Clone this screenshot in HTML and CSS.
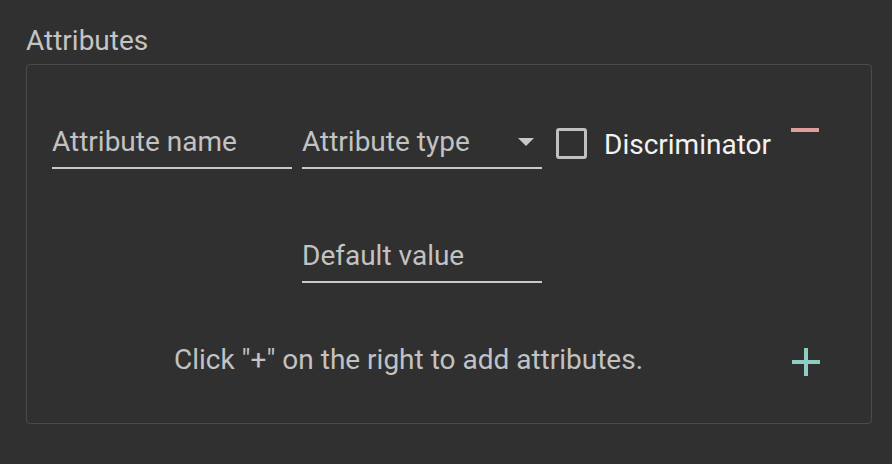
FILE: index.html
```html
<!DOCTYPE html>
<html>
<head>
<meta charset="utf-8">
<link rel="stylesheet" href="styles.css">
</head>
<body>
<section class="attrs">
  <h2 class="attrs-title">Attributes</h2>
  <div class="attrs-box">
    <div class="row row-main">
      <div class="field"><span class="placeholder">Attribute name</span></div>
      <div class="field field-select"><span class="placeholder">Attribute type</span><span class="caret"></span></div>
      <label class="check"><span class="check-box"></span><span class="check-label">Discriminator</span></label>
      <button class="icon-btn minus" aria-label="remove"><span class="bar"></span></button>
    </div>
    <div class="row row-second">
      <div class="spacer"></div>
      <div class="field"><span class="placeholder">Default value</span></div>
    </div>
    <div class="row row-add">
      <p class="hint">Click "+" on the right to add attributes.</p>
      <button class="icon-btn plus" aria-label="add"><span class="bar"></span><span class="bar bar-v"></span></button>
    </div>
  </div>
</section>
</body>
</html>
```
FILE: styles.css
```css
html, body {
  margin: 0;
  padding: 0;
  background: #303030;
  font-family: Roboto, "Liberation Sans", sans-serif;
}
.attrs {
  padding: 22px 20px 0 26px;
}
.attrs-title {
  margin: 0;
  font-size: 28px;
  font-weight: 400;
  color: #c4c4c4;
  line-height: 38px;
  height: 42px;
}
.attrs-box {
  width: 846px;
  height: 360px;
  border: 1.5px solid #4b4b4b;
  border-radius: 4px;
  padding: 0 0 0 25px;
  box-sizing: border-box;
}
.row {
  display: flex;
  align-items: flex-end;
}
.row-main {
  margin-top: 55px;
}
.field {
  position: relative;
  width: 240px;
  height: 49px;
  border-bottom: 2px solid #c9c9c9;
  box-sizing: border-box;
  display: flex;
  align-items: center;
  margin-right: 10px;
}
.placeholder {
  font-size: 28px;
  color: #c2c2c2;
  line-height: 30px;
  padding-bottom: 4px;
}
.field-select .caret {
  position: absolute;
  right: 8px;
  top: 18px;
  width: 0;
  height: 0;
  border-left: 8.5px solid transparent;
  border-right: 8.5px solid transparent;
  border-top: 8px solid #c8c8c8;
}
.check {
  display: flex;
  align-items: center;
  margin-left: 4px;
  align-self: flex-start;
  margin-top: 6px;
}
.check-box {
  width: 31px;
  height: 31px;
  box-sizing: border-box;
  border: 3px solid #c0c0c0;
  border-radius: 3px;
}
.check-label {
  margin-left: 17px;
  font-size: 28px;
  color: #f2f2f2;
  padding-top: 2px;
}
.icon-btn {
  background: none;
  border: 0;
  padding: 0;
  position: relative;
  width: 28px;
  height: 28px;
  cursor: pointer;
}
.minus {
  align-self: flex-start;
  margin-left: 20px;
  margin-top: -4px;
}
.minus .bar {
  position: absolute;
  left: 0;
  top: 12px;
  width: 28px;
  height: 4px;
  background: #e09d9b;
}
.row-second {
  margin-top: 65px;
}
.spacer {
  width: 250px;
}
.row-add {
  margin-top: 60px;
  align-items: flex-start;
}
.hint {
  margin: 0;
  width: 713px;
  text-align: center;
  font-size: 28px;
  color: #c2c2c2;
}
.plus {
  margin-left: 27px;
  margin-top: 5px;
}
.plus .bar {
  position: absolute;
  left: 0;
  top: 12px;
  width: 28px;
  height: 4px;
  background: #8ecdc6;
}
.plus .bar-v {
  left: 12px;
  top: 0;
  width: 4px;
  height: 28px;
}
```
